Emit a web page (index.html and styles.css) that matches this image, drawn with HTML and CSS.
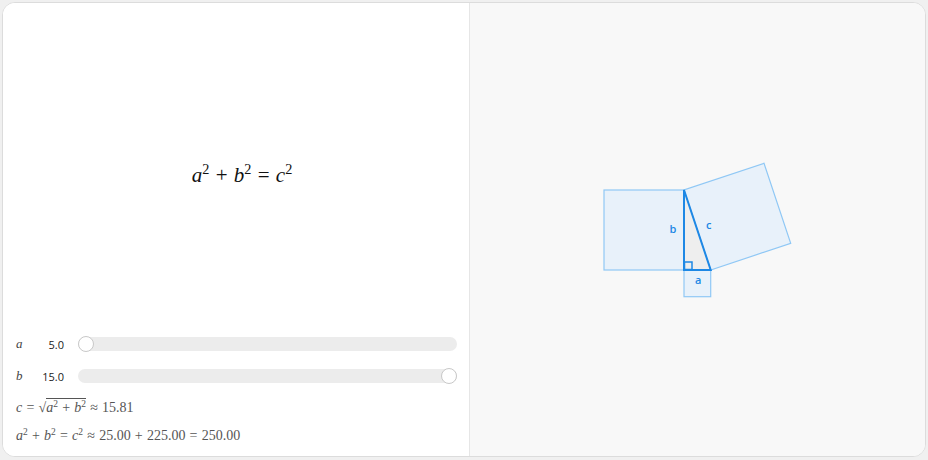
FILE: index.html
```html
<!DOCTYPE html>
<html>
<head>
<meta charset="utf-8">
<link rel="stylesheet" href="styles.css">
</head>
<body>
<div class="card">
  <div class="left">
    <div class="eq-area">
      <div class="eq"><i>a</i><sup>2</sup><span class="op">+</span><i>b</i><sup>2</sup><span class="op">=</span><i>c</i><sup>2</sup></div>
    </div>
    <div class="controls">
      <div class="row">
        <span class="var"><i>a</i></span>
        <span class="val">5.0</span>
        <div class="track"><div class="thumb thumb-left"></div></div>
      </div>
      <div class="row">
        <span class="var"><i>b</i></span>
        <span class="val">15.0</span>
        <div class="track"><div class="thumb thumb-right"></div></div>
      </div>
      <div class="line line1"><i>c</i><span class="op">=</span><span class="sqrt"><span class="rad">√</span><span class="under"><i>a</i><sup>2</sup><span class="op">+</span><i>b</i><sup>2</sup></span></span><span class="op">≈</span>15.81</div>
      <div class="line line2"><i>a</i><sup>2</sup><span class="op">+</span><i>b</i><sup>2</sup><span class="op">=</span><i>c</i><sup>2</sup><span class="op">≈</span>25.00<span class="op">+</span>225.00<span class="op">=</span>250.00</div>
    </div>
  </div>
  <div class="right">
    <svg class="fig" width="200" height="140" viewBox="597 160 200 140">
      <rect class="sq" x="603" y="190" width="80" height="80"/>
      <rect class="sq" x="683" y="270" width="26.7" height="26.7"/>
      <polygon class="sq" points="683,190 709.7,270 789.7,243.3 763,163.3"/>
      <polygon class="tri" points="683,190 683,270 709.7,270"/>
      <rect class="ra" x="683.5" y="262" width="7.5" height="7.5"/>
      <text class="lbl" x="668.5" y="233">b</text>
      <text class="lbl" x="705" y="229">c</text>
      <text class="lbl" x="694" y="284">a</text>
    </svg>
  </div>
</div>
</body>
</html>
```
FILE: styles.css
```css
html, body { margin: 0; padding: 0; }
body {
  background: #f0f0f0;
  width: 928px;
  height: 460px;
  padding: 2px;
  box-sizing: border-box;
  font-family: "Open Sans", "Noto Sans", sans-serif;
}
.card {
  display: flex;
  width: 924px;
  height: 455px;
  box-sizing: border-box;
  border: 1px solid #dcdcdc;
  border-radius: 13px;
  overflow: hidden;
  background: #fff;
}
.left {
  width: 467px;
  box-sizing: border-box;
  border-right: 1px solid #e6e6e6;
  display: flex;
  flex-direction: column;
  background: #fff;
}
.eq-area {
  flex: 1;
  display: flex;
  align-items: center;
  justify-content: center;
  padding: 20px 0 0 12px;
}
.eq {
  font-family: "Liberation Serif", "DejaVu Serif", serif;
  font-size: 21px;
  color: #111;
}
.eq sup, .line sup { font-size: 0.68em; vertical-align: 0; position: relative; top: -0.55em; font-style: normal; }
.eq .op { margin: 0 0.3em; }
.controls {
  padding: 0 12px 6px 13px;
  display: flex;
  flex-direction: column;
}
.row {
  display: flex;
  align-items: center;
  height: 32px;
}
.var {
  width: 20px;
  font-family: "Liberation Serif", "DejaVu Serif", serif;
  font-size: 13px;
  color: #444;
}
.val {
  width: 31px;
  text-align: right;
  font-size: 11px;
  color: #222;
  margin-right: 14px;
  position: relative;
  left: -3px;
}
.track {
  flex: 1;
  height: 14px;
  border-radius: 7px;
  background: #ececec;
  position: relative;
  margin-left: -3px;
}
.thumb {
  position: absolute;
  top: -1px;
  width: 14px;
  height: 14px;
  border-radius: 50%;
  background: #fff;
  border: 1px solid #c8c8c8;
}
.thumb-left { left: 0; }
.thumb-right { right: 0; }
.line {
  font-family: "Liberation Serif", "DejaVu Serif", serif;
  font-size: 14px;
  color: #555;
  height: 28px;
  line-height: 28px;
}
.line1 { margin-top: 2px; }
.line .op { margin: 0 0.3em; }
.sqrt { display: inline-block; }
.rad { font-style: normal; margin-right: 0; }
.under { border-top: 1px solid #555; line-height: 1.1; display: inline-block; padding-top: 1px; }
.right {
  flex: 1;
  background: #f8f8f8;
  display: flex;
  align-items: center;
  justify-content: center;
}
.fig { display: block; }
.sq { fill: #e8f1fa; stroke: #90c8f5; stroke-width: 1.2; }
.tri { fill: #eeeeee; stroke: #1e88e5; stroke-width: 2; stroke-linejoin: miter; }
.ra { fill: none; stroke: #1e88e5; stroke-width: 1.5; }
.lbl { fill: #1e88e5; font-family: "Open Sans", "Noto Sans", sans-serif; font-size: 11px; font-weight: 600; }
```
